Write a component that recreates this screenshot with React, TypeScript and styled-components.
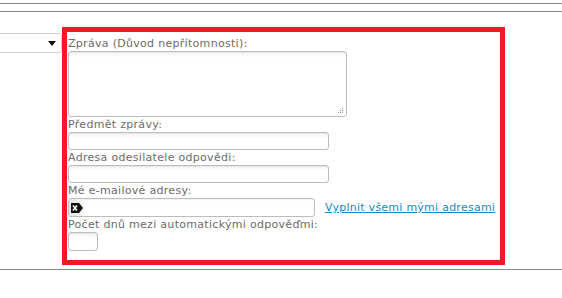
import React from 'react'
import styled, { createGlobalStyle } from 'styled-components'

const GlobalStyle = createGlobalStyle`
    html, body {
        margin: 0;
        background: #fff;
    }
    body {
        font-family: 'DejaVu Sans', Verdana, sans-serif;
        font-size: 11px;
        color: #666;
    }
`

const Page = styled.div`
    width: 562px;
    height: 298px;
    overflow: hidden;
`

const Toolbar = styled.div`
    margin-top: 3px;
    height: 7px;
    border-top: 1px solid #8a8a8a;
    border-bottom: 1px solid #8a8a8a;
`

const Row = styled.div`
    display: flex;
    align-items: flex-start;
    margin-top: 15px;
`

const LeftCell = styled.div`
    width: 62px;
    padding-top: 6px;
    display: flex;
    justify-content: flex-end;
    overflow: hidden;
`

const SelectBox = styled.div`
    flex-shrink: 0;
    width: 140px;
    height: 20px;
    box-sizing: border-box;
    border: 1px solid #cfcfcf;
    border-radius: 3px;
    background: #fff;
    display: flex;
    align-items: center;
    justify-content: flex-end;
    padding-right: 5px;
`

const Highlight = styled.div`
    width: 443px;
    box-sizing: border-box;
    border: 5px solid #ed1c24;
    padding: 5px 0 9px 1px;
    display: flex;
    flex-direction: column;
    align-items: flex-start;
`

const Label = styled.label<{ $first?: boolean }>`
    display: block;
    line-height: 14px;
    margin-top: ${(p) => (p.$first ? '0' : '1px')};
    color: #6b6b6b;
    letter-spacing: 0.3px;
    white-space: nowrap;
`

const fieldLook = `
    box-sizing: border-box;
    border: 1px solid #bdbdbd;
    border-radius: 3px;
    background: linear-gradient(#f4f4f4, #fff 6px);
    box-shadow: inset 0 1px 1px rgba(0, 0, 0, 0.06);
    font-family: 'DejaVu Sans', Verdana, sans-serif;
    font-size: 11px;
    outline: none;
`

const AreaWrap = styled.div`
    position: relative;
`

const TextArea = styled.textarea`
    ${fieldLook}
    display: block;
    width: 279px;
    height: 66px;
    margin: 0;
    resize: none;
`

const Grip = styled.svg`
    position: absolute;
    right: 3px;
    bottom: 3px;
`

const Input = styled.input<{ $w: number; $h?: number }>`
    ${fieldLook}
    display: block;
    width: ${(p) => p.$w}px;
    height: ${(p) => p.$h ?? 18}px;
    margin: 0;
    padding: 0 3px;
`

const InlineRow = styled.div`
    display: flex;
    align-items: center;
    gap: 10px;
`

const EmailBox = styled.div`
    ${fieldLook}
    width: 247px;
    height: 19px;
    display: flex;
    align-items: center;
    overflow: hidden;
    background: #fff;
`

const IconCell = styled.span`
    width: 15px;
    height: 100%;
    display: flex;
    align-items: center;
    justify-content: center;
    background: linear-gradient(90deg, #e4e4e4, #f7f7f7);
`

const BareInput = styled.input`
    flex: 1;
    border: none;
    background: transparent;
    height: 100%;
    outline: none;
    padding: 0 3px;
`

const Link = styled.a`
    color: #138ac9;
    text-decoration: underline;
    letter-spacing: 0.25px;
    white-space: nowrap;
`

const BottomRule = styled.div`
    margin-top: 4px;
    border-top: 1px solid #8a8a8a;
`

const Arrow = () => (
    <svg width="8" height="5" viewBox="0 0 8 5">
        <path d="M0 0H8L4 5Z" fill="#111" />
    </svg>
)

const ClearIcon = () => (
    <svg width="12" height="10" viewBox="0 0 12 10">
        <path d="M0 0H8L12 5L8 10H0Z" fill="#111" />
        <path d="M2 2.5L6 7.5M6 2.5L2 7.5" stroke="#fff" strokeWidth="1.6" />
    </svg>
)

const ResizeGrip = () => (
    <Grip width="7" height="7" viewBox="0 0 7 7">
        {[
            [5, 0],
            [5, 2],
            [3, 2],
            [5, 4],
            [3, 4],
            [1, 4],
        ].map(([x, y]) => (
            <rect key={`${x}-${y}`} x={x} y={y + 1} width="1" height="1" fill="#999" />
        ))}
    </Grip>
)

export default function App() {
    return (
        <Page>
            <GlobalStyle />
            <Toolbar />
            <Row>
                <LeftCell>
                    <SelectBox>
                        <Arrow />
                    </SelectBox>
                </LeftCell>
                <Highlight>
                    <Label $first>Zpráva (Důvod nepřítomnosti):</Label>
                    <AreaWrap>
                        <TextArea />
                        <ResizeGrip />
                    </AreaWrap>
                    <Label>Předmět zprávy:</Label>
                    <Input $w={261} />
                    <Label>Adresa odesilatele odpovědi:</Label>
                    <Input $w={261} />
                    <Label>Mé e-mailové adresy:</Label>
                    <InlineRow>
                        <EmailBox>
                            <IconCell>
                                <ClearIcon />
                            </IconCell>
                            <BareInput />
                        </EmailBox>
                        <Link href="#">Vyplnit všemi mými adresami</Link>
                    </InlineRow>
                    <Label>Počet dnů mezi automatickými odpověďmi:</Label>
                    <Input $w={30} $h={19} />
                </Highlight>
            </Row>
            <BottomRule />
        </Page>
    )
}
